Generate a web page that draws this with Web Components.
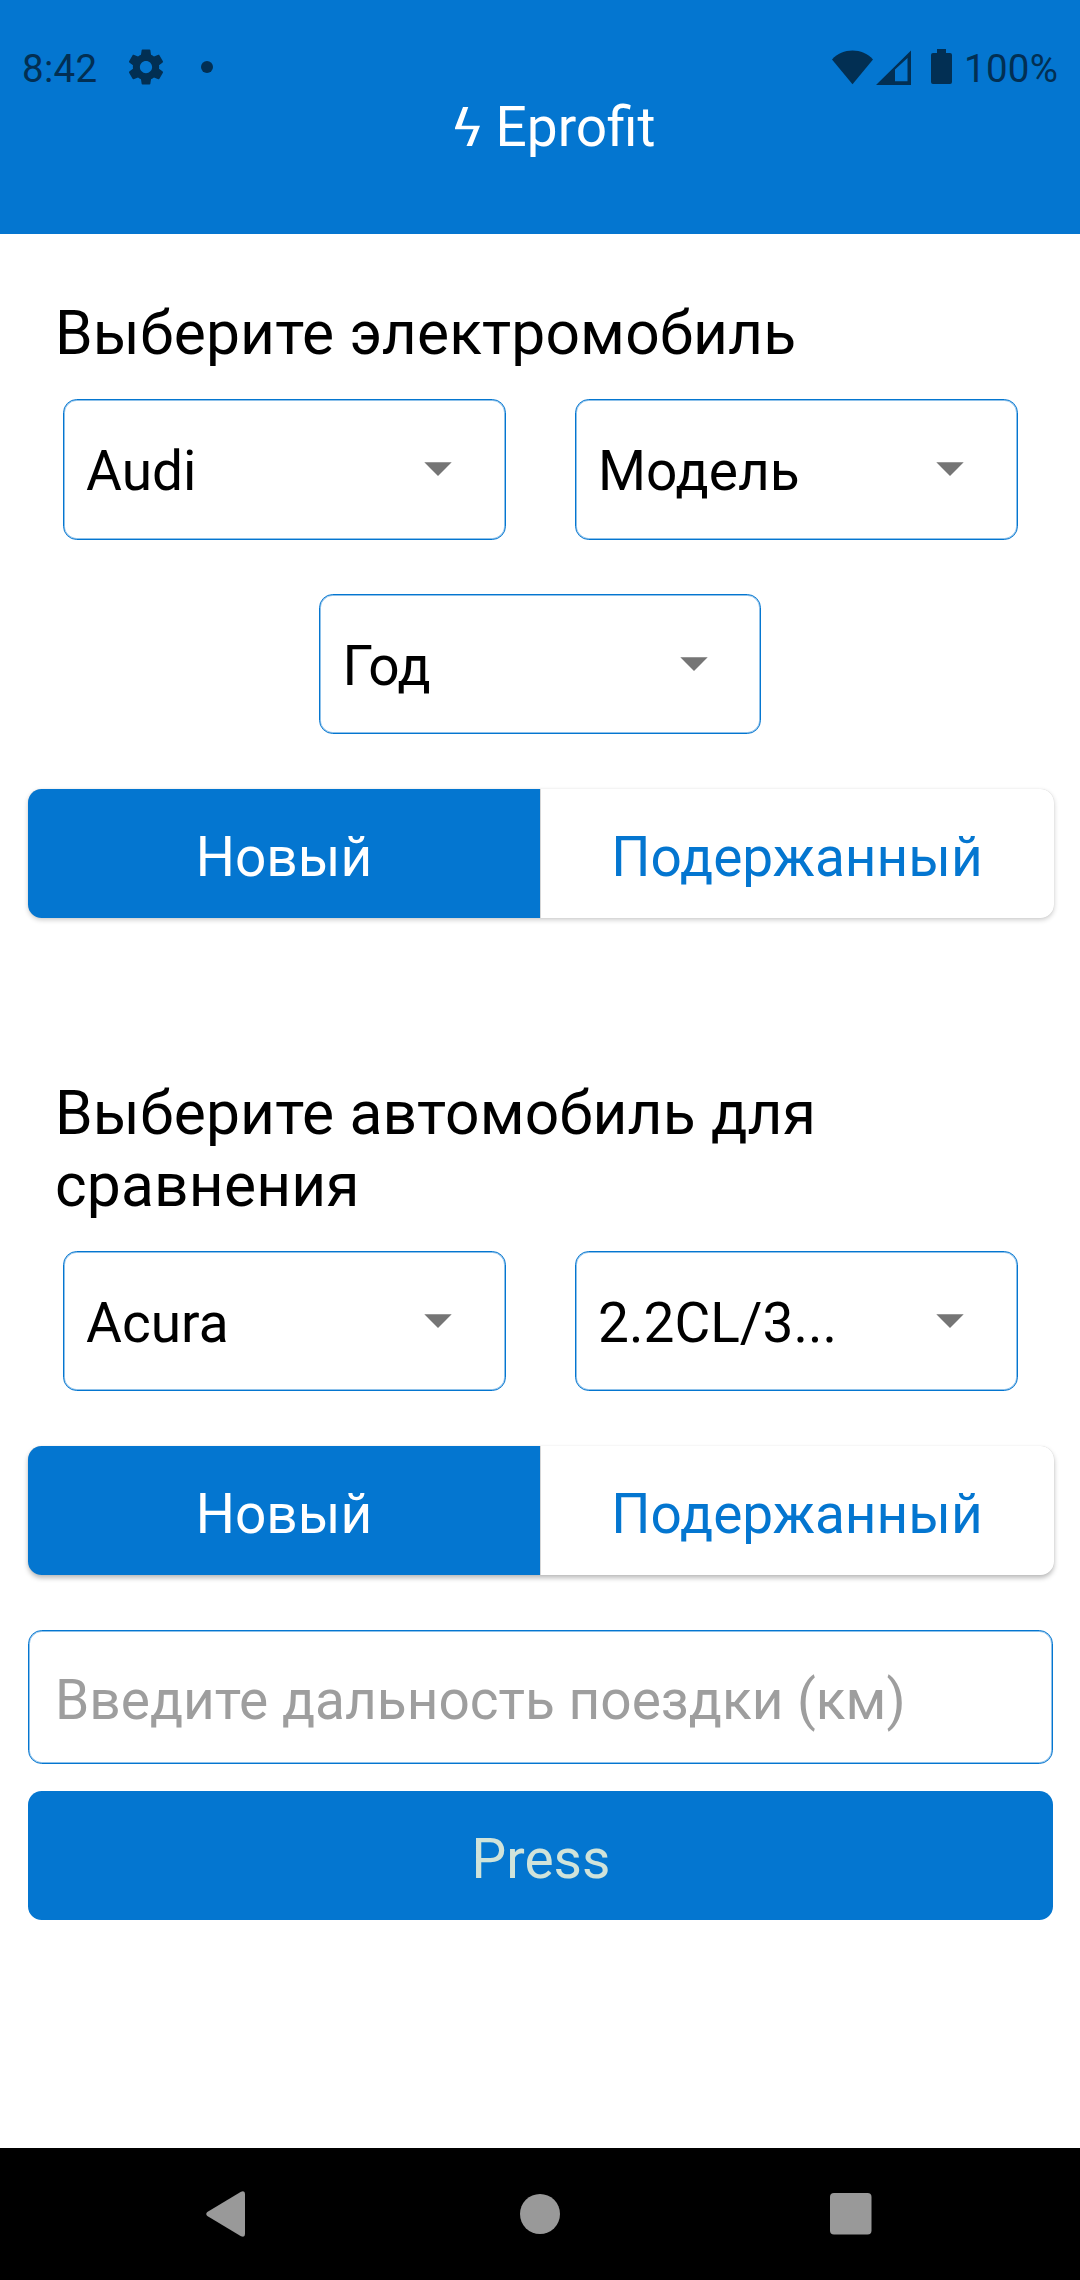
<!DOCTYPE html>
<html lang="ru">
<head>
<meta charset="utf-8">
<title>Eprofit</title>
<style>
  html, body { margin: 0; background: #fff; }
  body { font-family: Roboto, "Noto Sans", sans-serif; --brand: #0476d0; --ink: #022f53; }
</style>
</head>
<body>
<ep-app></ep-app>
<script>
const define = (name, html) => {
  const t = document.createElement('template');
  t.innerHTML = html;
  customElements.define(name, class extends HTMLElement {
    constructor() {
      super();
      this.attachShadow({ mode: 'open' }).appendChild(t.content.cloneNode(true));
    }
  });
};

define('ep-status', `
<style>
  :host { display: flex; justify-content: space-between; height: 94px; box-sizing: border-box; padding: 46px 22px 0 22px; color: var(--ink); font-size: 38.5px; line-height: 46px; letter-spacing: .3px; }
  div { display: flex; align-items: flex-start; }
  span { white-space: nowrap; }
  svg { display: block; fill: currentColor; }
  .gear { margin-left: 29px; }
  .dot { margin: 15px 0 0 34px; }
  .wifi { margin: 4px 0 0 0; }
  .signal { margin: 4px 0 0 3px; }
  .battery { margin: 3px 12px 0 20px; }
</style>
<div>
  <span style="width:74px">8:42</span>
  <svg class="gear" width="42" height="42" viewBox="0 0 24 24"><path d="M19.43 12.98c.04-.32.07-.64.07-.98s-.03-.66-.07-.98l2.11-1.65c.19-.15.24-.42.12-.64l-2-3.46c-.12-.22-.39-.3-.61-.22l-2.49 1c-.52-.4-1.08-.73-1.69-.98l-.38-2.65C14.46 2.18 14.25 2 14 2h-4c-.25 0-.46.18-.49.42l-.38 2.65c-.61.25-1.17.59-1.69.98l-2.49-1c-.23-.09-.49 0-.61.22l-2 3.46c-.13.22-.07.49.12.64l2.11 1.65c-.04.32-.07.65-.07.98s.03.66.07.98l-2.11 1.65c-.19.15-.24.42-.12.64l2 3.46c.12.22.39.3.61.22l2.49-1c.52.4 1.08.73 1.69.98l.38 2.65c.03.24.24.42.49.42h4c.25 0 .46-.18.49-.42l.38-2.65c.61-.25 1.17-.59 1.69-.98l2.49 1c.23.09.49 0 .61-.22l2-3.46c.12-.22.07-.49-.12-.64l-2.11-1.65zM12 15.5c-1.93 0-3.5-1.57-3.5-3.5s1.57-3.5 3.5-3.5 3.5 1.57 3.5 3.5-1.57 3.5-3.5 3.5z"/></svg>
  <svg class="dot" width="12" height="12" viewBox="0 0 12 12"><circle cx="6" cy="6" r="6"/></svg>
</div>
<div>
  <svg class="wifi" width="41" height="35" viewBox="0 0 41 35"><path d="M20.5 34.3 0 9.4C5.5 3.7 12.6.6 20.5.6S35.500 3.700 41 9.400Z"/></svg>
  <svg class="signal" width="35" height="35" viewBox="0 0 35 35"><path fill-rule="evenodd" d="M0 35 35 .5V35ZM19 19.500V31.300H31.500V8Z"/></svg>
  <svg class="battery" width="21" height="35" viewBox="0 0 21 35"><path d="M6 0H15V4H19Q21 4 21 6V33Q21 35 19 35H2Q0 35 0 33V6Q0 4 2 4H6Z"/></svg>
  <span style="width:94px">100%</span>
</div>`);

define('ep-header', `
<style>
  :host { display: flex; flex-direction: column; height: 234px; background: var(--brand); }
  h1 { margin: 1px 0 0 453px; font: 400 55px/64px Roboto, "Noto Sans", sans-serif; color: #fff; display: flex; white-space: pre; }
  svg { display: block; margin: 12px 15.5px 0 2px; }
</style>
<ep-status></ep-status>
<h1><svg width="25" height="39" viewBox="0 0 25 39"><path fill="#fff" d="M8 0H13.300L6.600 18.800H25L17 39H11.500L18.600 22.200H0V20.700Z"/></svg><slot></slot></h1>`);

define('ep-heading', `
<style>
  :host { display: block; padding: 0 55px; font-size: 60.5px; line-height: 72px; letter-spacing: .17px; color: #000; }
</style>
<slot></slot>`);

define('ep-select', `
<style>
  :host { display: flex; justify-content: space-between; box-sizing: border-box; width: 443px; height: 140px; padding: 39px 53px 0 22.6px; border: 1px solid var(--brand); border-radius: 13.75px; box-shadow: inset 0 0 0 1px rgba(4,117,208,.45); font-size: 55px; line-height: 64px; color: #000; white-space: nowrap; }
  svg { display: block; margin-top: 23px; }
</style>
<span><slot></slot></span>
<svg width="28" height="14" viewBox="0 0 28 14"><path fill="#757575" d="M.3.300H27.700L14 14Z"/></svg>`);

define('ep-row', `
<style>
  :host { display: flex; justify-content: center; gap: 69px; }
</style>
<slot></slot>`);

define('ep-toggle', `
<style>
  :host { display: grid; grid-template-columns: 512px 513px; gap: 1px; margin: 0 26px 0 28px; height: 129px; border-radius: 13.75px; background: #d6d6d6; box-shadow: 0 2px 5px rgba(0,0,0,.2), 0 0 1px rgba(0,0,0,.12); }
  :host([raised]) { box-shadow: 0 3px 5px rgba(0,0,0,.27), 0 0 1px rgba(0,0,0,.12); }
  div { box-sizing: border-box; height: 129px; padding-top: 36px; text-align: center; font-size: 55px; line-height: 64px; }
  .on { background: var(--brand); color: #fff; border-radius: 13.75px 0 0 13.75px; }
  .off { padding-right: 1px; background: #fff; color: var(--brand); border-radius: 0 13.75px 13.75px 0; }
</style>
<div class="on"><slot name="on"></slot></div>
<div class="off"><slot name="off"></slot></div>`);

define('ep-input', `
<style>
  :host { display: block; box-sizing: border-box; margin: 0 27px 0 28px; height: 134px; padding: 37px 26px 0; border: 1px solid var(--brand); border-radius: 13.75px; box-shadow: inset 0 0 0 1px rgba(4,117,208,.45); font-size: 55px; line-height: 64px; color: #9e9e9e; white-space: nowrap; }
</style>
<slot></slot>`);

define('ep-button', `
<style>
  :host { display: block; box-sizing: border-box; margin: 0 27px 0 28px; height: 129px; padding: 36px 0 0 1px; border-radius: 13.75px; background: var(--brand); text-align: center; font-size: 55px; line-height: 64px; color: #d0e3da; }
</style>
<slot></slot>`);

define('ep-navbar', `
<style>
  :host { display: flex; justify-content: space-between; align-items: center; box-sizing: border-box; height: 132px; padding: 0 208px 0 206px; background: #000; }
  svg { display: block; fill: #999; }
</style>
<svg width="40" height="46" viewBox="0 0 40 46"><path d="M1.300 21 35 .8Q39 -.8 39 3V43Q39 46.800 35 45.200L1.300 25Q-.8 23 1.300 21Z"/></svg>
<svg width="40" height="40" viewBox="0 0 40 40" style="margin-left:4px"><circle cx="20" cy="20" r="20"/></svg>
<svg width="42" height="42" viewBox="0 0 42 42"><rect width="41.500" height="41.500" rx="4"/></svg>`);

define('ep-app', `
<style>
  :host { display: flex; flex-direction: column; width: 1080px; height: 2280px; background: #fff; }
  main { flex: 1; display: flex; flex-direction: column; padding-top: 64px; }
</style>
<ep-header>Eprofit</ep-header>
<main>
  <ep-heading>Выберите электромобиль</ep-heading>
  <ep-row style="margin-top:29px"><ep-select style="height:141px">Audi</ep-select><ep-select style="height:141px">Модель</ep-select></ep-row>
  <ep-row style="margin-top:54px"><ep-select style="width:442px;padding-right:52px">Год</ep-select></ep-row>
  <ep-toggle style="margin-top:55px"><span slot="on">Новый</span><span slot="off">Подержанный</span></ep-toggle>
  <ep-heading style="margin-top:160px">Выберите автомобиль для сравнения</ep-heading>
  <ep-row style="margin-top:29px"><ep-select>Acura</ep-select><ep-select>2.2CL/3...</ep-select></ep-row>
  <ep-toggle raised style="margin-top:55px"><span slot="on">Новый</span><span slot="off">Подержанный</span></ep-toggle>
  <ep-input style="margin-top:55px">Введите дальность поездки (км)</ep-input>
  <ep-button style="margin-top:27px">Press</ep-button>
</main>
<ep-navbar></ep-navbar>`);
</script>
</body>
</html>
